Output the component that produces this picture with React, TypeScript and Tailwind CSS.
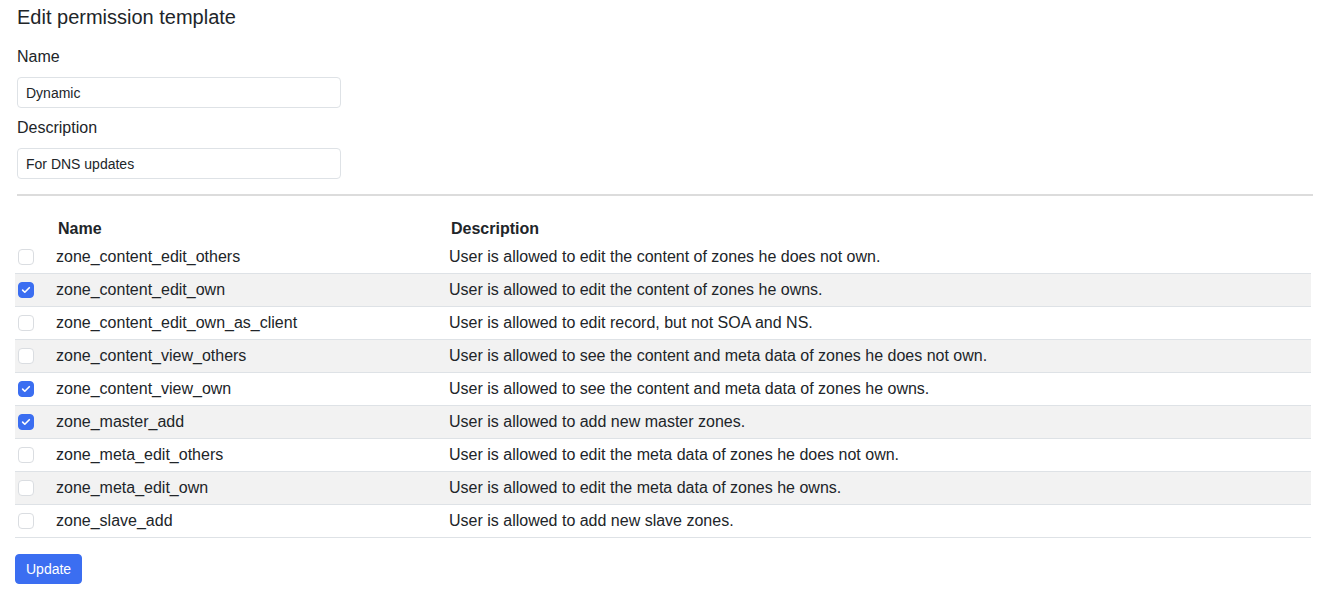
import { useState } from 'react';

const perms = [
    { name: 'zone_content_edit_others', descr: 'User is allowed to edit the content of zones he does not own.', on: false },
    { name: 'zone_content_edit_own', descr: 'User is allowed to edit the content of zones he owns.', on: true },
    { name: 'zone_content_edit_own_as_client', descr: 'User is allowed to edit record, but not SOA and NS.', on: false },
    { name: 'zone_content_view_others', descr: 'User is allowed to see the content and meta data of zones he does not own.', on: false },
    { name: 'zone_content_view_own', descr: 'User is allowed to see the content and meta data of zones he owns.', on: true },
    { name: 'zone_master_add', descr: 'User is allowed to add new master zones.', on: true },
    { name: 'zone_meta_edit_others', descr: 'User is allowed to edit the meta data of zones he does not own.', on: false },
    { name: 'zone_meta_edit_own', descr: 'User is allowed to edit the meta data of zones he owns.', on: false },
    { name: 'zone_slave_add', descr: 'User is allowed to add new slave zones.', on: false },
];

function Check({ checked, onClick }: { checked: boolean; onClick: () => void }) {
    return (
        <span
            onClick={onClick}
            className={`flex w-4 h-4 rounded-[4px] border items-center justify-center cursor-pointer ${
                checked ? 'bg-[#3b6ef1] border-[#3b6ef1]' : 'bg-white border-[#dadde1]'
            }`}
        >
            {checked && (
                <svg viewBox="0 0 16 16" className="w-3 h-3">
                    <path d="M3.5 8.2l2.9 2.8 6-6" fill="none" stroke="#fff" strokeWidth="2.2" strokeLinecap="round" strokeLinejoin="round" />
                </svg>
            )}
        </span>
    );
}

export default function App() {
    const [name, setName] = useState('Dynamic');
    const [descr, setDescr] = useState('For DNS updates');
    const [checked, setChecked] = useState(perms.map(p => p.on));

    const toggle = (i: number) => setChecked(c => c.map((v, j) => (j === i ? !v : v)));

    return (
        <div className="min-h-screen bg-white text-[#212529] pl-[15px] pr-[12px] pt-[5px] font-['Liberation_Sans',Arial,sans-serif]">
            <div className="pl-[2px]">
                <h5 className="text-[20px] leading-6 font-medium">Edit permission template</h5>

                <label className="block mt-4 mb-2 text-base leading-6">Name</label>
                <input
                    value={name}
                    onChange={e => setName(e.target.value)}
                    className="block w-[324px] h-[31px] px-2 border border-[#dee2e6] rounded-[4px] text-sm outline-none"
                />

                <label className="block mt-[8px] mb-2 text-base leading-6">Description</label>
                <input
                    value={descr}
                    onChange={e => setDescr(e.target.value)}
                    className="block w-[324px] h-[31px] px-2 border border-[#dee2e6] rounded-[4px] text-sm outline-none"
                />

                <hr className="mt-[15px] mb-[13px] w-[1296px] border-0 h-[2px] bg-[#dcdcdc]" />
            </div>

            <table className="w-full border-collapse text-base leading-6">
                <thead>
                    <tr>
                        <th className="w-[33px] pt-[8px] pb-0"></th>
                        <th className="w-[393px] pt-[8px] pb-0 pl-[10px] text-left font-bold">Name</th>
                        <th className="pt-[8px] pb-0 pl-[10px] text-left font-bold">Description</th>
                    </tr>
                </thead>
                <tbody>
                    {perms.map((p, i) => (
                        <tr key={p.name} className={`border-b border-[#dee2e6] ${i % 2 === 1 ? 'bg-[#f2f2f2]' : 'bg-white'}`}>
                            <td className="py-1 pl-[3px] align-middle">
                                <Check checked={checked[i]} onClick={() => toggle(i)} />
                            </td>
                            <td className="py-1 pl-2">{p.name}</td>
                            <td className="py-1 pl-2">{p.descr}</td>
                        </tr>
                    ))}
                </tbody>
            </table>

            <button className="block mt-4 px-[10px] py-1 text-sm leading-[20px] text-white bg-[#3b6ef1] border border-[#3b6ef1] rounded-[4px]">
                Update
            </button>
        </div>
    );
}
